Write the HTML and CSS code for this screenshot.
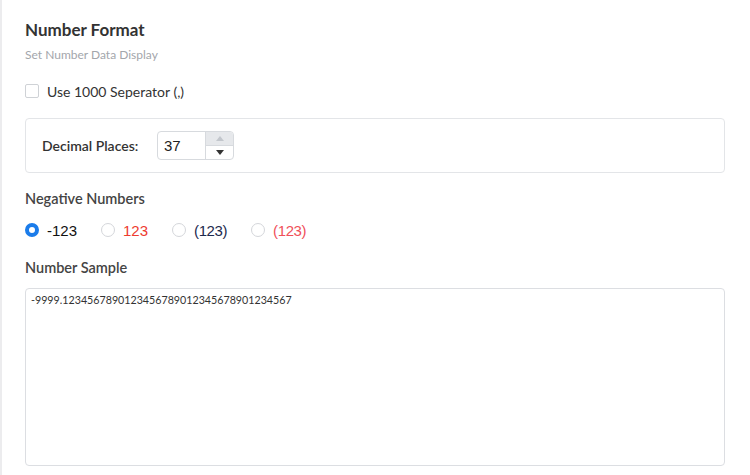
FILE: index.html
```html
<!DOCTYPE html>
<html>
<head>
<meta charset="utf-8">
<link rel="stylesheet" href="styles.css">
</head>
<body>
<div class="page">
  <h1 class="title">Number Format</h1>
  <div class="subtitle">Set Number Data Display</div>
  <label class="check-row"><span class="checkbox"></span><span class="check-label">Use 1000 Seperator (,)</span></label>
  <div class="panel">
    <span class="panel-label">Decimal Places:</span>
    <div class="spinner">
      <div class="spin-value">37</div>
      <div class="spin-btns">
        <div class="spin-btn up"><svg width="8" height="5" viewBox="0 0 8 5"><path d="M0 5 L4 0 L8 5 Z" fill="#c2c6cc"/></svg></div>
        <div class="spin-btn down"><svg width="8" height="5" viewBox="0 0 8 5"><path d="M0 0 L4 5 L8 0 Z" fill="#333"/></svg></div>
      </div>
    </div>
  </div>
  <div class="section-label">Negative Numbers</div>
  <div class="radios">
    <label class="radio-item"><span class="radio checked"></span><span class="radio-text">-123</span></label>
    <label class="radio-item"><span class="radio"></span><span class="radio-text red">123</span></label>
    <label class="radio-item"><span class="radio"></span><span class="radio-text navy paren">(123)</span></label>
    <label class="radio-item"><span class="radio"></span><span class="radio-text pink paren">(123)</span></label>
  </div>
  <div class="section-label sample-label">Number Sample</div>
  <div class="sample">-9999.1234567890123456789012345678901234567</div>
</div>
</body>
</html>
```

FILE: styles.css
```css
html, body {
  margin: 0;
  padding: 0;
  background: #fff;
}
body {
  font-family: Lato, "Open Sans", sans-serif;
  color: #333;
  height: 475px;
  overflow: hidden;
}
.page {
  border-left: 2px solid #ececee;
  padding: 18px 25px 0 23px;
  height: 475px;
  box-sizing: border-box;
}
.title {
  margin: 0;
  font-size: 17px;
  font-weight: 700;
  line-height: 24px;
  color: #333;
}
.subtitle {
  margin-top: 5px;
  font-size: 12px;
  line-height: 16px;
  color: #a3a6ab;
}
.check-row {
  display: flex;
  align-items: center;
  margin-top: 19px;
  height: 18px;
}
.checkbox {
  width: 12px;
  height: 12px;
  border: 1px solid #cfd2d6;
  border-radius: 2px;
  background: #fff;
}
.check-label {
  margin-left: 8px;
  font-size: 14px;
  color: #333;
}
.panel {
  margin-top: 18px;
  height: 55px;
  box-sizing: border-box;
  border: 1px solid #e3e5e8;
  border-radius: 4px;
  display: flex;
  align-items: center;
  padding-left: 16px;
}
.panel-label {
  font-size: 14px;
  font-weight: 600;
  color: #333;
  width: 115px;
}
.spinner {
  display: flex;
  width: 77px;
  height: 29px;
  box-sizing: border-box;
  border: 1px solid #d7dade;
  border-radius: 4px;
  overflow: hidden;
}
.spin-value {
  width: 48px;
  border-right: 1px solid #d7dade;
  font-family: "Liberation Sans", Arial, sans-serif;
  font-size: 15px;
  line-height: 27px;
  padding-left: 6px;
  box-sizing: border-box;
  color: #222;
}
.spin-btns {
  flex: 1;
  display: flex;
  flex-direction: column;
}
.spin-btn {
  flex: 1;
  display: flex;
  align-items: center;
  justify-content: center;
}
.spin-btn.up {
  background: #e6e8eb;
  border-bottom: 1px solid #d7dade;
}
.section-label {
  margin-top: 16px;
  font-size: 14.5px;
  font-weight: 600;
  line-height: 20px;
  color: #444;
}
.radios {
  display: flex;
  margin-top: 12px;
  height: 18px;
  align-items: center;
}
.radio-item {
  display: flex;
  align-items: center;
  margin-right: 24px;
}
.radio {
  width: 12px;
  height: 12px;
  border: 1px solid #d4d6da;
  border-radius: 50%;
  box-sizing: content-box;
  background: #fff;
}
.radio.checked {
  width: 6px;
  height: 6px;
  border: 4px solid #1b7cea;
  background: #fff;
}
.radio-text {
  margin-left: 8px;
  font-family: "Liberation Sans", Arial, sans-serif;
  font-size: 15px;
  color: #111;
}
.radio-text.paren {
  letter-spacing: -0.4px;
}
.radio-text.red { color: #ee3b2f; }
.radio-text.navy { color: #1d2a4d; }
.radio-text.pink { color: #f0505a; }
.sample-label {
  margin-top: 19px;
}
.sample {
  margin-top: 10px;
  height: 178px;
  box-sizing: border-box;
  border: 1px solid #dcdee2;
  border-radius: 4px;
  padding: 4px 5px;
  font-size: 10.7px;
  color: #333;
}
```
